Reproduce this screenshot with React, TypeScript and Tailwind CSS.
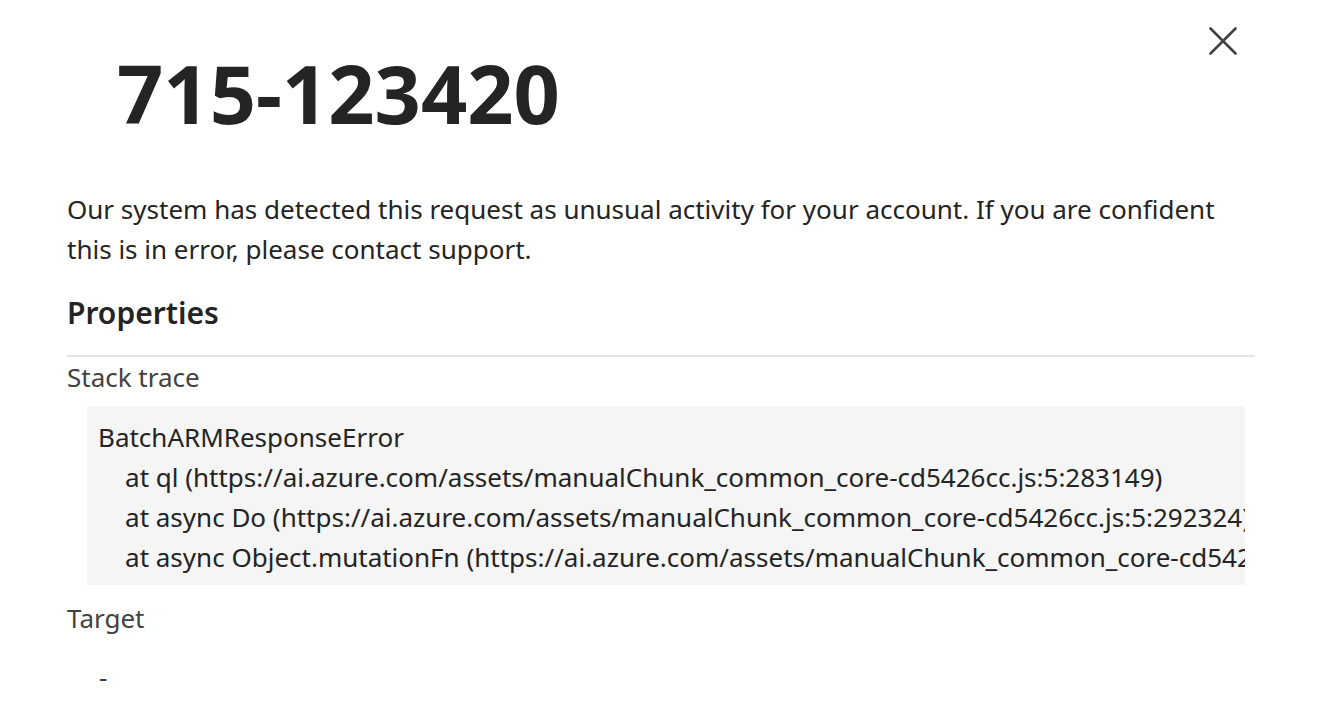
import React from 'react';

const stackLines = [
  'BatchARMResponseError',
  '    at ql (https://ai.azure.com/assets/manualChunk_common_core-cd5426cc.js:5:283149)',
  '    at async Do (https://ai.azure.com/assets/manualChunk_common_core-cd5426cc.js:5:292324)',
  '    at async Object.mutationFn (https://ai.azure.com/assets/manualChunk_common_core-cd5426cc.js:5:301877)',
];

function CloseIcon() {
  return (
    <svg width="28" height="28" viewBox="0 0 28 28" fill="none">
      <path d="M1.5 1.5L26.5 26.5M26.5 1.5L1.5 26.5" stroke="#424242" strokeWidth="2.6" strokeLinecap="round" />
    </svg>
  );
}

export default function App() {
  return (
    <div
      className="w-[1328px] h-[706px] overflow-hidden bg-white text-[#242424]"
      style={{ fontFamily: '"Noto Sans", "Open Sans", sans-serif' }}
    >
      <div className="pl-[67px] pr-[73px]">
        <div className="flex items-start justify-between">
          <h1 className="ml-[50px] mt-[52px] text-[81px] leading-[81px] font-bold">715-123420</h1>
          <button className="mt-[27px] mr-[18px] flex items-center justify-center">
            <CloseIcon />
          </button>
        </div>

        <p className="mt-[56px] text-[26px] leading-[40px]">
          Our system has detected this request as unusual activity for your account. If you are confident this is in
          error, please contact support.
        </p>

        <h2 className="mt-[22px] text-[30px] leading-[44px] font-semibold">Properties</h2>

        <div className="mt-[20px] border-t-2 border-[#e6e6e6]" />

        <div className="text-[26px] leading-[40px] text-[#424242]">Stack trace</div>

        <div className="mt-[9px] ml-[20px] mr-[10px] bg-[#f5f5f5] pl-[11px] pt-[11px] pb-[8px] overflow-hidden">
          {stackLines.map((line) => (
            <div key={line} className="whitespace-pre text-[26px] leading-[40px] text-[#242424]">
              {line}
            </div>
          ))}
        </div>

        <div className="mt-[13px] text-[26px] leading-[40px] text-[#424242]">Target</div>
        <div className="mt-[19px] ml-[32px] text-[26px] leading-[40px] text-[#424242]">-</div>
      </div>
    </div>
  );
}
